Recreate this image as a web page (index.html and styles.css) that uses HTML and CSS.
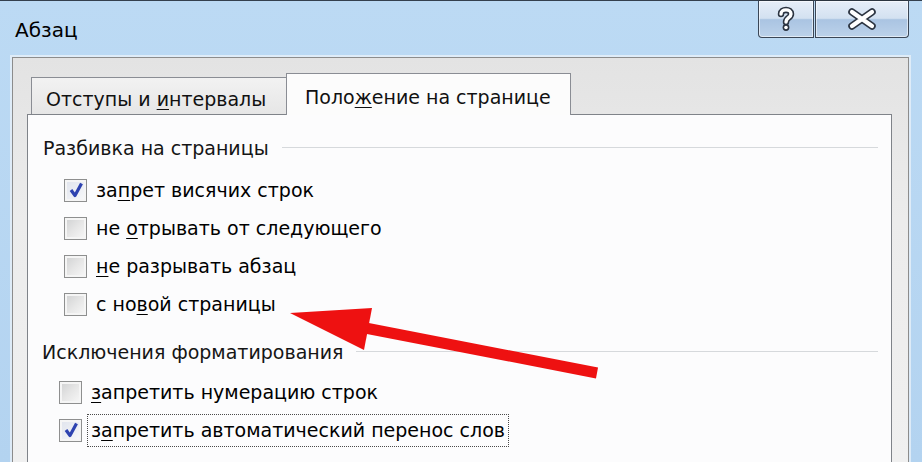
FILE: index.html
```html
<!DOCTYPE html>
<html lang="ru">
<head>
<meta charset="utf-8">
<title>Абзац</title>
<link rel="stylesheet" href="styles.css">
</head>
<body>
<div class="window">
  <div class="titlebar">
    <div class="title">Абзац</div>
    <div class="caption-buttons">
      <div class="cbtn help">
        <svg width="20" height="26" viewBox="0 0 20 26">
          <path d="M5 8 C5 2.5 15 2.5 15 8 C15 12 10 11.5 10 16" fill="none" stroke="#2b3340" stroke-width="6.5" stroke-linecap="round"/>
          <circle cx="10" cy="21.5" r="3.4" fill="#2b3340"/>
          <path d="M5 8 C5 2.5 15 2.5 15 8 C15 12 10 11.5 10 16" fill="none" stroke="#fff" stroke-width="3.4" stroke-linecap="round"/>
          <circle cx="10" cy="21.5" r="1.8" fill="#fff"/>
        </svg>
      </div>
      <div class="cbtn close">
        <svg width="30" height="22" viewBox="0 0 30 22">
          <path d="M5 4 L25 18 M25 4 L5 18" fill="none" stroke="#2b3340" stroke-width="7.5" stroke-linecap="round"/>
          <path d="M5 4 L25 18 M25 4 L5 18" fill="none" stroke="#fff" stroke-width="4.2" stroke-linecap="round"/>
        </svg>
      </div>
    </div>
  </div>
  <div class="client">
    <div class="tabs">
      <div class="tab"><span>Отступы и <u>и</u>нтервалы</span></div>
      <div class="tab active"><span>Поло<u>ж</u>ение на странице</span></div>
    </div>
    <div class="panel">
      <div class="group-title"><span>Разбивка на страницы</span><div class="rule"></div></div>
      <div class="options first">
        <div class="row"><span class="cb checked"><svg width="16" height="16" viewBox="0 0 16 16"><path d="M3 8 L7 13.5 L13.5 1.5" fill="none" stroke="#2e43b0" stroke-width="3.2" stroke-linejoin="round"/></svg></span><span class="lbl">за<u>п</u>рет висячих строк</span></div>
        <div class="row"><span class="cb"></span><span class="lbl">не <u>о</u>трывать от следующего</span></div>
        <div class="row"><span class="cb"></span><span class="lbl"><u>н</u>е разрывать абзац</span></div>
        <div class="row"><span class="cb"></span><span class="lbl">с но<u>в</u>ой страницы</span></div>
      </div>
      <div class="group-title second"><span>Исключения форматирования</span><div class="rule"></div></div>
      <div class="options second-opts">
        <div class="row"><span class="cb"></span><span class="lbl"><u>з</u>апретить нумерацию строк</span></div>
        <div class="row"><span class="cb checked"><svg width="16" height="16" viewBox="0 0 16 16"><path d="M3 8 L7 13.5 L13.5 1.5" fill="none" stroke="#2e43b0" stroke-width="3.2" stroke-linejoin="round"/></svg></span><span class="lbl focus">з<u>а</u>претить автоматический перенос слов</span></div>
      </div>
    </div>
  </div>
  <svg class="arrow" width="922" height="462" viewBox="0 0 922 462">
    <line x1="597" y1="373" x2="355" y2="326" stroke="#ee1111" stroke-width="11"/>
    <polygon points="290,313 372,308 364,350" fill="#ee1111"/>
  </svg>
</div>
</body>
</html>
```

FILE: styles.css
```css
html, body {
  margin: 0;
  padding: 0;
}
body {
  width: 922px;
  height: 462px;
  overflow: hidden;
  font-family: "DejaVu Sans", "Liberation Sans", sans-serif;
  color: #111;
}
.window {
  position: relative;
  width: 922px;
  height: 462px;
  display: flex;
  flex-direction: column;
  background: linear-gradient(180deg, #bcdaf4 0%, #b3d3f0 100%);
  overflow: hidden;
}
.titlebar {
  height: 56px;
  border-top: 1px solid #34404e;
  display: flex;
  justify-content: space-between;
  align-items: flex-start;
}
.title {
  padding-left: 15px;
  padding-top: 17px;
  font-size: 20px;
  line-height: 24px;
  color: #000;
}
.caption-buttons {
  display: flex;
  margin-top: -1px;
  margin-right: 13px;
}
.cbtn {
  height: 36px;
  border: 1px solid #3a4656;
  border-top-color: #2b3540;
  display: flex;
  align-items: center;
  justify-content: center;
  background: linear-gradient(180deg, #e6eef8 0%, #d3e1f1 48%, #aac4e2 52%, #bcd2ea 100%);
  box-shadow: inset 0 0 0 1px rgba(255,255,255,0.55);
}
.cbtn.help {
  width: 54px;
  border-radius: 0 0 0 4px;
}
.cbtn.close {
  width: 92px;
  margin-left: 1px;
  border-radius: 0 0 4px 0;
}
.client {
  flex: 1;
  margin: 0 13px 0 12px;
  border: 1px solid #8c8c8c;
  border-bottom: none;
  display: flex;
  flex-direction: column;
  background: linear-gradient(180deg, #e3e3e3 0%, #ececec 40%, #f0f0f0 100%);
  box-shadow: 0 0 0 2px rgba(238, 244, 250, 0.7);
}
.tabs {
  display: flex;
  align-items: flex-end;
  padding: 15px 0 0 18px;
  font-size: 19px;
}
.tab {
  box-sizing: border-box;
  height: 37px;
  width: 255px;
  padding: 5px 0 0 14px;
  display: flex;
  align-items: center;
  border: 1px solid #8a8d94;
  border-bottom: none;
  border-right: none;
  background: linear-gradient(180deg, #f2f2f2 0%, #e6e6e6 100%);
  white-space: nowrap;
}
.tab.active {
  height: 42px;
  width: 285px;
  padding-left: 18px;
  border-right: 1px solid #8a8d94;
  background: #fcfcfc;
  margin-bottom: -1px;
  position: relative;
  z-index: 1;
}
.panel {
  flex: 1;
  margin: 0 16px 0 14px;
  border: 1px solid #7f8389;
  border-bottom: none;
  background: #fcfcfd;
  padding: 19px 13px 0 15px;
  font-size: 19px;
}
.group-title {
  display: flex;
  align-items: center;
  height: 28px;
  line-height: 28px;
  white-space: nowrap;
  color: #151515;
}
.group-title .rule {
  flex: 1;
  height: 1px;
  margin-left: 13px;
  margin-top: -2px;
  background: #d6d9dc;
}
.group-title.second {
  margin-top: 15px;
  margin-left: -1px;
}
.options {
  display: flex;
  flex-direction: column;
}
.options.first {
  margin-top: 9px;
  padding-left: 21px;
}
.options.second-opts {
  margin-top: 7px;
  padding-left: 16px;
}
.row {
  height: 38px;
  display: flex;
  align-items: center;
  white-space: nowrap;
}
.cb {
  box-sizing: border-box;
  width: 23px;
  height: 23px;
  border: 1px solid #8e8f8f;
  box-shadow: inset 0 0 0 2px #f5f5f5;
  background: linear-gradient(135deg, #cfd0d1 0%, #e6e6e6 50%, #f8f8f8 100%);
  display: flex;
  align-items: center;
  justify-content: center;
  flex-shrink: 0;
}
.cb.checked {
  background: linear-gradient(135deg, #dfe3ec 0%, #eef0f5 60%, #fafafa 100%);
}
.lbl {
  margin-left: 5px;
  padding: 3px 3px;
  line-height: 25px;
  border: 1px dotted transparent;
  color: #000;
}
.lbl.focus {
  border-color: #4a4a4a;
}
u {
  text-underline-offset: 3px;
  text-decoration-thickness: 1px;
}
.arrow {
  position: absolute;
  left: 0;
  top: 0;
  pointer-events: none;
}
```
